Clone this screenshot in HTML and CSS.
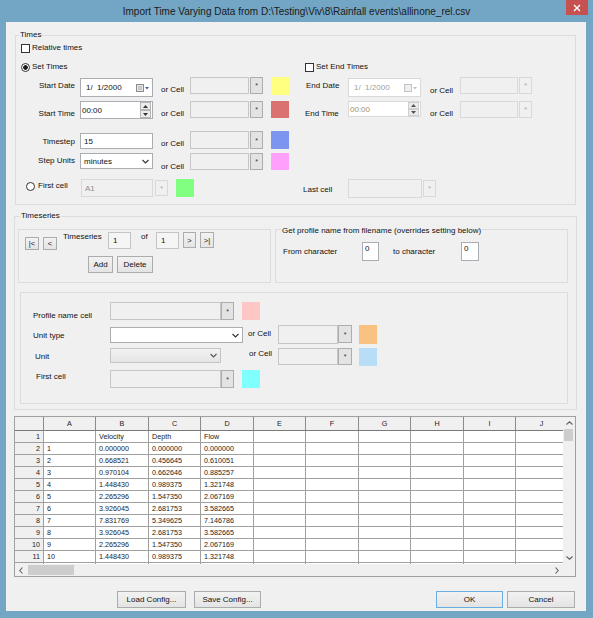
FILE: index.html
```html
<!DOCTYPE html>
<html lang="en">
<head>
    <meta charset="UTF-8">
    <title>Import Time Varying Data</title>
    <link rel="stylesheet" href="styles.css">
</head>
<body>

<div class="window">
    <!-- Title bar -->
    <div class="titlebar">
        <div class="title">Import Time Varying Data from D:\Testing\Viv\8\Rainfall events\allinone_rel.csv</div>
        <div class="close">
            <svg width="8" height="8" viewBox="0 0 8 8"><path d="M1 1L7 7M7 1L1 7" stroke="#fff" stroke-width="1.4"/></svg>
        </div>
    </div>

    <div class="client">

        <!-- Times group -->
        <div class="group times">
            <div class="group-title">Times</div>

            <div class="row r1">
                <span class="check"></span><span class="t">Relative times</span>
            </div>

            <div class="row r2">
                <div class="half"><span class="radio on"></span><span class="t">Set Times</span></div>
                <div class="half-r"><span class="check"></span><span class="t">Set End Times</span></div>
            </div>

            <div class="row r3">
                <div class="half">
                    <span class="lbl">Start Date</span>
                    <div class="picker">
                        <span>1/&nbsp;&nbsp;1/2000</span>
                        <svg class="cal" width="13" height="8" viewBox="0 0 13 8"><rect x="0.5" y="0.5" width="7" height="7" fill="#e4e4e4" stroke="#8c8c8c"/><rect x="2" y="2" width="4" height="4" fill="#c9c9c9"/><path d="M9 3h4l-2 2.5z" fill="#3d5f92"/></svg>
                    </div>
                    <span class="orcell">or Cell</span>
                    <input class="tb cell" type="text" readonly>
                    <button class="star">*</button>
                    <span class="swatch" style="background:#ffff80"></span>
                </div>
                <div class="half-r">
                    <span class="rlbl">End Date</span>
                    <div class="picker dis">
                        <span>1/&nbsp;&nbsp;1/2000</span>
                        <svg class="cal" width="13" height="8" viewBox="0 0 13 8"><rect x="0.5" y="0.5" width="7" height="7" fill="#f0f0f0" stroke="#c4c4c4"/><path d="M9 3h4l-2 2.5z" fill="#c0c0c0"/></svg>
                    </div>
                    <span class="orcell-r">or Cell</span>
                    <input class="tb cell-r" type="text" disabled>
                    <button class="star dis">*</button>
                </div>
            </div>

            <div class="row r4">
                <div class="half">
                    <span class="lbl">Start Time</span>
                    <div class="picker time">
                        <span>00:00</span>
                        <div class="spin">
                            <div class="spin-btn"><svg width="5" height="3" viewBox="0 0 5 3"><path d="M0 3h5L2.5 0z" fill="#333"/></svg></div>
                            <div class="spin-btn"><svg width="5" height="3" viewBox="0 0 5 3"><path d="M0 0h5L2.5 3z" fill="#333"/></svg></div>
                        </div>
                    </div>
                    <span class="orcell">or Cell</span>
                    <input class="tb cell" type="text" readonly>
                    <button class="star">*</button>
                    <span class="swatch" style="background:#d97270"></span>
                </div>
                <div class="half-r">
                    <span class="rlbl">End Time</span>
                    <div class="picker time dis">
                        <span class="olive">00:00</span>
                        <div class="spin">
                            <div class="spin-btn"><svg width="5" height="3" viewBox="0 0 5 3"><path d="M0 3h5L2.5 0z" fill="#555"/></svg></div>
                            <div class="spin-btn"><svg width="5" height="3" viewBox="0 0 5 3"><path d="M0 0h5L2.5 3z" fill="#555"/></svg></div>
                        </div>
                    </div>
                    <span class="orcell-r">or Cell</span>
                    <input class="tb cell-r" type="text" disabled>
                    <button class="star dis">*</button>
                </div>
            </div>

            <div class="row r5">
                <div class="half">
                    <span class="lbl">Timestep</span>
                    <input class="tb step" type="text" value="15">
                    <span class="orcell">or Cell</span>
                    <input class="tb cell" type="text" readonly>
                    <button class="star">*</button>
                    <span class="swatch" style="background:#7c95ee"></span>
                </div>
            </div>

            <div class="row r6">
                <div class="half">
                    <span class="lbl">Step Units</span>
                    <div class="combo units">
                        <span>minutes</span>
                        <svg class="chev" width="7" height="5" viewBox="0 0 7 5"><path d="M0.5 1L3.5 4L6.5 1" fill="none" stroke="#333" stroke-width="1.1"/></svg>
                    </div>
                    <span class="orcell">or Cell</span>
                    <input class="tb cell" type="text" readonly>
                    <button class="star">*</button>
                    <span class="swatch" style="background:#ffa0fc"></span>
                </div>
            </div>

            <div class="row r7">
                <div class="half">
                    <span class="radio-lbl"><span class="radio"></span><span>First cell</span></span>
                    <input class="tb first" type="text" value="A1" disabled>
                    <button class="star dis">*</button>
                    <span class="swatch" style="background:#80ff80"></span>
                </div>
                <div class="half-r">
                    <span class="rlbl">Last cell</span>
                    <input class="tb last" type="text" disabled>
                    <button class="star dis">*</button>
                </div>
            </div>
        </div>

        <!-- Timeseries group -->
        <div class="group tseries">
            <div class="group-title">Timeseries</div>

            <div class="ts-top">
                <div class="box nav">
                    <div class="nav-row">
                        <button class="btn nb low first-nb">|&lt;</button>
                        <button class="btn nb low">&lt;</button>
                        <span class="nav-lbl">Timeseries</span>
                        <input class="tb num" type="text" value="1">
                        <span class="of">of</span>
                        <input class="tb num" type="text" value="1">
                        <button class="btn nb next">&gt;</button>
                        <button class="btn nb">&gt;|</button>
                    </div>
                    <div class="nav-btns">
                        <button class="btn add">Add</button>
                        <button class="btn del">Delete</button>
                    </div>
                </div>

                <div class="box fname">
                    <div class="box-title">Get profile name from filename (overrides setting below)</div>
                    <div class="fn-row">
                        <span class="fn-lbl">From character</span>
                        <input class="tb chr" type="text" value="0">
                        <span class="fn-lbl2">to character</span>
                        <input class="tb chr chr2" type="text" value="0">
                    </div>
                </div>
            </div>

            <div class="box profile">
                <div class="prow p1">
                    <span class="plbl">Profile name cell</span>
                    <input class="tb pcell" type="text" readonly>
                    <button class="star">*</button>
                    <span class="swatch" style="background:#ffc6c6"></span>
                </div>
                <div class="prow p2">
                    <span class="plbl">Unit type</span>
                    <div class="combo">
                        <svg class="chev" width="7" height="5" viewBox="0 0 7 5"><path d="M0.5 1L3.5 4L6.5 1" fill="none" stroke="#333" stroke-width="1.1"/></svg>
                    </div>
                    <span class="orcell">or Cell</span>
                    <input class="tb ocell" type="text" readonly>
                    <button class="star">*</button>
                    <span class="swatch" style="background:#f9c283"></span>
                </div>
                <div class="prow p3">
                    <span class="plbl">Unit</span>
                    <div class="combo dis">
                        <svg class="chev" width="7" height="5" viewBox="0 0 7 5"><path d="M0.5 1L3.5 4L6.5 1" fill="none" stroke="#555" stroke-width="1.1"/></svg>
                    </div>
                    <span class="orcell">or Cell</span>
                    <input class="tb ocell" type="text" readonly>
                    <button class="star">*</button>
                    <span class="swatch" style="background:#b7def6"></span>
                </div>
                <div class="prow p4">
                    <span class="plbl">First cell</span>
                    <input class="tb pcell" type="text" readonly>
                    <button class="star">*</button>
                    <span class="swatch" style="background:#80ffff"></span>
                </div>
            </div>
        </div>

        <!-- Data grid -->
        <div class="sheet">
            <div class="cells">
                <div class="tr hd"><div class="c"></div><div class="c">A</div><div class="c">B</div><div class="c">C</div><div class="c">D</div><div class="c">E</div><div class="c">F</div><div class="c">G</div><div class="c">H</div><div class="c">I</div><div class="c">J</div></div>
                <div class="tr"><div class="c">1</div><div class="c"></div><div class="c">Velocity</div><div class="c">Depth</div><div class="c">Flow</div><div class="c"></div><div class="c"></div><div class="c"></div><div class="c"></div><div class="c"></div><div class="c"></div></div>
                <div class="tr"><div class="c">2</div><div class="c">1</div><div class="c">0.000000</div><div class="c">0.000000</div><div class="c">0.000000</div><div class="c"></div><div class="c"></div><div class="c"></div><div class="c"></div><div class="c"></div><div class="c"></div></div>
                <div class="tr"><div class="c">3</div><div class="c">2</div><div class="c">0.668521</div><div class="c">0.456645</div><div class="c">0.610051</div><div class="c"></div><div class="c"></div><div class="c"></div><div class="c"></div><div class="c"></div><div class="c"></div></div>
                <div class="tr"><div class="c">4</div><div class="c">3</div><div class="c">0.970104</div><div class="c">0.662646</div><div class="c">0.885257</div><div class="c"></div><div class="c"></div><div class="c"></div><div class="c"></div><div class="c"></div><div class="c"></div></div>
                <div class="tr"><div class="c">5</div><div class="c">4</div><div class="c">1.448430</div><div class="c">0.989375</div><div class="c">1.321748</div><div class="c"></div><div class="c"></div><div class="c"></div><div class="c"></div><div class="c"></div><div class="c"></div></div>
                <div class="tr"><div class="c">6</div><div class="c">5</div><div class="c">2.265296</div><div class="c">1.547350</div><div class="c">2.067169</div><div class="c"></div><div class="c"></div><div class="c"></div><div class="c"></div><div class="c"></div><div class="c"></div></div>
                <div class="tr"><div class="c">7</div><div class="c">6</div><div class="c">3.926045</div><div class="c">2.681753</div><div class="c">3.582665</div><div class="c"></div><div class="c"></div><div class="c"></div><div class="c"></div><div class="c"></div><div class="c"></div></div>
                <div class="tr"><div class="c">8</div><div class="c">7</div><div class="c">7.831769</div><div class="c">5.349625</div><div class="c">7.146786</div><div class="c"></div><div class="c"></div><div class="c"></div><div class="c"></div><div class="c"></div><div class="c"></div></div>
                <div class="tr"><div class="c">9</div><div class="c">8</div><div class="c">3.926045</div><div class="c">2.681753</div><div class="c">3.582665</div><div class="c"></div><div class="c"></div><div class="c"></div><div class="c"></div><div class="c"></div><div class="c"></div></div>
                <div class="tr"><div class="c">10</div><div class="c">9</div><div class="c">2.265296</div><div class="c">1.547350</div><div class="c">2.067169</div><div class="c"></div><div class="c"></div><div class="c"></div><div class="c"></div><div class="c"></div><div class="c"></div></div>
                <div class="tr"><div class="c">11</div><div class="c">10</div><div class="c">1.448430</div><div class="c">0.989375</div><div class="c">1.321748</div><div class="c"></div><div class="c"></div><div class="c"></div><div class="c"></div><div class="c"></div><div class="c"></div></div>
                <div class="tr"><div class="c"></div><div class="c"></div><div class="c"></div><div class="c"></div><div class="c"></div><div class="c"></div><div class="c"></div><div class="c"></div><div class="c"></div><div class="c"></div><div class="c"></div></div>
            </div>
            <div class="vscroll">
                <div class="arr"><svg width="7" height="4" viewBox="0 0 7 4"><path d="M0.5 3.5L3.5 0.8L6.5 3.5" fill="none" stroke="#606060" stroke-width="1.1"/></svg></div>
                <div class="vthumb"></div>
                <div class="arr"><svg width="7" height="4" viewBox="0 0 7 4"><path d="M0.5 0.5L3.5 3.2L6.5 0.5" fill="none" stroke="#606060" stroke-width="1.1"/></svg></div>
            </div>
            <div class="hscroll">
                <div class="arr"><svg width="4" height="7" viewBox="0 0 4 7"><path d="M3.5 0.5L0.8 3.5L3.5 6.5" fill="none" stroke="#606060" stroke-width="1.1"/></svg></div>
                <div class="hthumb"></div>
                <div class="arr"><svg width="4" height="7" viewBox="0 0 4 7"><path d="M0.5 0.5L3.2 3.5L0.5 6.5" fill="none" stroke="#606060" stroke-width="1.1"/></svg></div>
            </div>
            <div class="corner"></div>
        </div>

        <!-- Dialog buttons -->
        <div class="dlg-btns">
            <button class="btn dbtn load">Load Config...</button>
            <button class="btn dbtn save">Save Config...</button>
            <button class="btn dbtn ok">OK</button>
            <button class="btn dbtn cancel">Cancel</button>
        </div>

    </div>
</div>

</body>
</html>
```

FILE: styles.css
```css
/* General */
* {
    box-sizing: border-box;
}

body {
    margin: 0;
    font-family: "Liberation Sans", Arial, sans-serif;
    font-size: 8px;
    color: #111;
    background: #73a5c4;
}

/* Window frame */
.window {
    width: 593px;
    height: 618px;
    background: #73a5c4;
    padding: 0 7px 7px 6px;
}

.titlebar {
    display: grid;
    height: 22px;
    margin: 0 -7px 0 -6px;
}

.title,
.close {
    grid-area: 1 / 1;
}

.title {
    text-align: center;
    font-size: 10px;
    line-height: 22px;
    padding-top: 1px;
    color: #1a1a1a;
}

.close {
    justify-self: end;
    width: 22px;
    height: 15px;
    margin-right: 5px;
    background: #c75050;
    display: flex;
    align-items: center;
    justify-content: center;
}

.client {
    height: 589px;
    background: #f0f0f0;
    overflow: hidden;
}

/* Group boxes */
.group,
.box {
    border: 1px solid #dcdcdc;
    flex: none;
}

.group-title,
.box-title {
    display: table;
    line-height: 12px;
    padding: 0 1px;
    background: #f0f0f0;
}

.group-title {
    margin: -7px 0 0 3px;
}

.times {
    width: 561px;
    height: 170px;
    margin: 13px 0 0 9px;
}

.tseries {
    width: 563px;
    height: 194px;
    margin: 11px 0 0 8px;
}

.tseries .group-title {
    margin-left: 5px;
}

/* Rows in the Times group */
.row,
.half,
.half-r,
.prow,
.nav-row,
.fn-row {
    display: flex;
    align-items: flex-start;
}

.half {
    width: 284px;
    flex: none;
}

.t {
    line-height: 12px;
    white-space: nowrap;
}

.r1 { height: 12px; margin-top: 1px; padding-left: 5px; }
.r2 { height: 12px; margin-top: 7px; }
.r2 .half, .r2 .half-r { padding-left: 5px; }
.r3 { height: 20px; margin-top: 4px; }
.r4 { height: 18px; margin-top: 4px; }
.r5 { height: 18px; margin-top: 12px; }
.r6 { height: 17px; margin-top: 4px; }
.r7 { height: 19px; margin-top: 9px; }

.check,
.radio {
    width: 9px;
    height: 9px;
    margin: 2px 2px 0 0;
    border: 1px solid #333;
    background: #fff;
    flex: none;
}

.radio {
    border-radius: 50%;
}

.radio.on {
    background: radial-gradient(circle, #1a1a1a 0, #1a1a1a 2px, #fff 2.6px);
}

.lbl,
.rlbl,
.orcell,
.orcell-r,
.plbl,
.nav-lbl,
.of,
.fn-lbl,
.fn-lbl2,
.radio-lbl {
    line-height: 12px;
    white-space: nowrap;
    flex: none;
}

.lbl {
    width: 64px;
    padding-right: 5px;
    text-align: right;
}

.rlbl {
    width: 48px;
    padding-left: 6px;
}

.orcell {
    width: 37px;
    padding-left: 8px;
}

.orcell-r {
    width: 39px;
    padding-left: 9px;
}

.r3 .lbl, .r3 .rlbl { padding-top: 3px; }
.r3 .orcell { padding-top: 7px; }
.r3 .orcell-r { padding-top: 8px; }
.r4 .lbl, .r4 .orcell, .r4 .orcell-r { padding-top: 7px; }
.r4 .rlbl { padding-top: 7px; padding-left: 5px; }
.r5 .lbl { padding-top: 5px; }
.r5 .orcell { padding-top: 7px; }
.r6 .lbl { padding-top: 2px; }
.r6 .orcell { padding-top: 8px; }
.r7 .rlbl { padding-top: 5px; padding-left: 3px; }

.radio-lbl {
    width: 65px;
    padding: 1px 0 0 10px;
    display: flex;
    align-items: flex-start;
}

.radio-lbl .radio {
    margin-top: 2px;
    margin-right: 3px;
}

/* Inputs */
.tb {
    display: block;
    flex: none;
    margin: 0;
    padding: 0 3px;
    border: 1px solid #abadb3;
    background: #fff;
    font: inherit;
    color: #111;
    outline: none;
}

.tb:disabled {
    background: #f0f0f0;
    border-color: #d9d9d9;
    color: #8d8d8d;
}

.cell {
    width: 59px;
    background: #f0f0f0;
    border-color: #c6c6c6;
}

.cell-r {
    width: 58px;
}

.star {
    width: 13px;
    margin: 0 0 0 1px;
    padding: 0;
    flex: none;
    border: 1px solid #adadad;
    background: #e3e3e3;
    font: inherit;
    font-size: 7px;
    color: #333;
}

.star.dis {
    border-color: #d9d9d9;
    background: #f0f0f0;
    color: #a6a6a6;
}

.swatch {
    width: 18px;
    margin-left: 8px;
    flex: none;
}

.picker,
.combo {
    display: flex;
    align-items: center;
    flex: none;
    border: 1px solid #abadb3;
    background: #fff;
    white-space: nowrap;
}

.picker {
    width: 73px;
    padding-left: 5px;
}

.picker.time {
    padding-left: 1px;
}

.picker.dis {
    border-color: #d9d9d9;
    color: #a0a0a0;
}

.olive {
    color: #a08f6c;
}

.cal {
    margin: 0 3px 0 auto;
}

.spin {
    margin: 0 1px 0 auto;
    width: 11px;
    height: 16px;
    display: flex;
    flex-direction: column;
}

.spin-btn {
    flex: 1;
    border: 1px solid #b5b5b5;
    background: #ececec;
    display: flex;
    align-items: center;
    justify-content: center;
}

.dis .spin-btn {
    border-color: #cfcfcf;
}

.combo {
    padding-left: 3px;
}

.combo.dis {
    background: linear-gradient(#f2f2f2, #e5e5e5);
    border-color: #c5c5c5;
}

.chev {
    margin: 0 3px 0 auto;
}

.r3 .picker { margin-top: 1px; height: 19px; }
.r3 .tb, .r3 .star { height: 17px; }
.r3 .swatch { height: 18px; }
.r4 .picker { height: 18px; }
.r4 .half-r .picker { height: 16px; }
.r4 .tb, .r4 .star, .r4 .swatch { height: 17px; }
.r4 .dis .spin { height: 14px; }
.r5 .step { width: 73px; height: 16px; margin-top: 2px; }
.r5 .cell, .r5 .star, .r5 .swatch { height: 18px; }
.r6 .units { width: 73px; height: 16px; }
.r6 .cell, .r6 .star, .r6 .swatch { height: 17px; }
.r7 .first { width: 72px; height: 18px; }
.r7 .half .star { margin: 1px 0 0 2px; height: 16px; }
.r7 .swatch { height: 18px; }
.r7 .last { width: 74px; height: 19px; }
.r7 .half-r .star { margin-top: 1px; height: 17px; }

/* Buttons */
.btn {
    margin: 0;
    padding: 0;
    flex: none;
    border: 1px solid #acacac;
    background: linear-gradient(#f2f2f2, #e4e4e4);
    font: inherit;
    color: #111;
    white-space: nowrap;
}

/* Timeseries navigation */
.ts-top {
    display: flex;
    margin-top: 7px;
    padding-left: 3px;
}

.nav {
    width: 253px;
    height: 54px;
    padding-top: 2px;
}

.fname {
    width: 293px;
    height: 54px;
    margin-left: 4px;
}

.nb {
    width: 14px;
    height: 16px;
    margin-left: 4px;
    font-size: 7.5px;
}

.nb.low {
    height: 13px;
    margin-top: 5px;
}

.nb.first-nb {
    margin-left: 6px;
}

.nb.next {
    width: 13px;
}

.nav-lbl {
    width: 45px;
    margin: -1px 0 0 6px;
}

.num {
    width: 23px;
    height: 17px;
    padding-left: 4px;
    background: #f5f5f5;
    border-color: #c4c4c4;
}

.of {
    width: 25px;
    padding-left: 10px;
    margin-top: -1px;
}

.nav-btns {
    display: flex;
    margin-top: 6px;
    padding-left: 69px;
}

.add {
    width: 25px;
    height: 17px;
}

.del {
    width: 36px;
    height: 17px;
    margin-left: 4px;
}

.box-title {
    margin: -5px 0 0 5px;
}

.fn-row {
    margin-top: 5px;
}

.fn-lbl {
    width: 86px;
    padding: 4px 0 0 7px;
}

.fn-lbl2 {
    width: 82px;
    padding: 4px 0 0 14px;
}

.chr {
    width: 17px;
    height: 19px;
    padding: 0 0 6px 2px;
}

.chr2 {
    width: 18px;
}

/* Profile settings */
.profile {
    width: 548px;
    height: 112px;
    margin: 9px 0 0 5px;
}

.plbl {
    width: 89px;
    padding-left: 12px;
}

.pcell {
    width: 111px;
    height: 18px;
    background: #f0f0f0;
    border-color: #c6c6c6;
}

.ocell {
    width: 60px;
    background: #f0f0f0;
    border-color: #c6c6c6;
}

.prow .star {
    margin-left: 0;
}

.p1 { margin-top: 9px; }
.p1 .plbl { padding-top: 8px; }
.p1 .star, .p1 .swatch { height: 18px; }

.p2 { margin-top: 3px; }
.p2 .plbl { padding-top: 5px; }
.p2 .combo { width: 133px; height: 16px; margin-top: 2px; }
.p2 .orcell { width: 35px; padding: 3px 0 0 5px; }
.p2 .ocell { height: 19px; }
.p2 .star { width: 14px; height: 18px; }
.p2 .swatch { height: 19px; margin-left: 7px; }

.p3 { margin-top: 4px; }
.p3 .plbl { padding: 3px 0 0 14px; }
.p3 .combo { width: 111px; height: 15px; }
.p3 .orcell { width: 57px; padding: 0 0 0 28px; }
.p3 .ocell { height: 17px; }
.p3 .star { width: 14px; height: 17px; }
.p3 .swatch { height: 18px; margin-left: 7px; }

.p4 { margin-top: 4px; }
.p4 .plbl { padding: 1px 0 0 15px; }
.p4 .star, .p4 .swatch { height: 18px; }

/* Data grid */
.sheet {
    width: 562px;
    height: 161px;
    margin: 6px 0 0 8px;
    border: 1px solid #a0a0a0;
    display: grid;
    grid-template-columns: 548px 12px;
    grid-template-rows: 147px 12px;
}

.cells {
    overflow: hidden;
    background: #fff;
}

.tr {
    display: flex;
    height: 12px;
}

.tr.hd {
    height: 14px;
}

.c {
    flex: none;
    width: 52px;
    padding-left: 3px;
    border-right: 1px solid #a0a0a0;
    border-bottom: 1px solid #a0a0a0;
    font-size: 7.2px;
    line-height: 11px;
    color: #222;
    white-space: nowrap;
    overflow: hidden;
}

.c:nth-child(3),
.c:nth-child(5),
.c:nth-child(7),
.c:nth-child(9) {
    width: 53px;
}

.c:first-child {
    width: 29px;
    padding: 0 3px 0 0;
    text-align: right;
    background: #f0f0f0;
}

.hd .c {
    padding: 0;
    text-align: center;
    line-height: 13px;
    background: #f0f0f0;
    border-right-color: #8a8a8a;
    border-bottom-color: #7a7a7a;
}

/* Scrollbars */
.vscroll,
.hscroll,
.corner {
    background: #f0f0f0;
}

.vscroll {
    display: flex;
    flex-direction: column;
}

.hscroll {
    display: flex;
}

.arr {
    flex: none;
    width: 12px;
    height: 12px;
    display: flex;
    align-items: center;
    justify-content: center;
}

.vthumb {
    flex: none;
    height: 12px;
    margin: 0 2px 0 1px;
    background: #cdcdcd;
}

.vscroll .arr:last-child {
    margin-top: auto;
}

.hthumb {
    flex: none;
    width: 46px;
    margin: 1px 0 1px 1px;
    background: #cdcdcd;
}

.hscroll .arr:last-child {
    margin-left: auto;
}

/* Dialog buttons */
.dlg-btns {
    display: flex;
    margin-top: 14px;
    padding: 0 11px 0 111px;
}

.dbtn {
    height: 17px;
}

.load { width: 69px; }
.save { width: 67px; margin-left: 8px; }
.ok { width: 67px; margin-left: auto; border-color: #6aaee6; }
.cancel { width: 68px; margin-left: 4px; }
```
